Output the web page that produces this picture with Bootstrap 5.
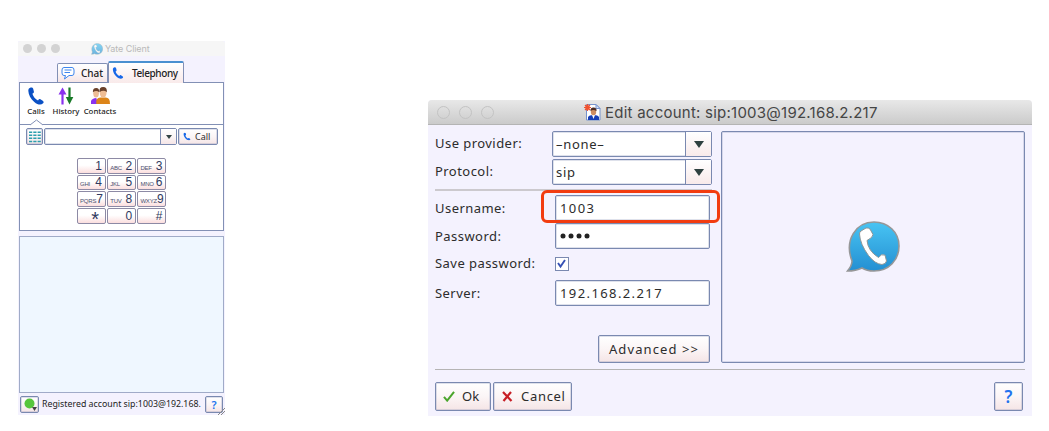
<!DOCTYPE html>
<html lang="en">
<head>
<meta charset="utf-8">
<meta name="viewport" content="width=device-width, initial-scale=1">
<title>Yate Client</title>
<link href="https://cdn.jsdelivr.net/npm/bootstrap@5.3.0/dist/css/bootstrap.min.css" rel="stylesheet">
<style>
  body { width: 1049px; height: 431px; overflow: hidden; background: #fff; color: #2c2c2c; font-family: "Noto Sans", "Open Sans", sans-serif; line-height: 1; white-space: nowrap; }
  svg { display: block; flex: none; }
  .win { background: #f4f2fe; }
  .edge { border: 1px solid #7a89b0; border-radius: 2px; box-shadow: inset 0 0 0 1px rgba(122, 137, 176, .25); }
  .face { background: linear-gradient(#fff, #fbf5f6 50%, #f5e5e6); color: #2c2c2c; padding: 0; font-size: inherit; line-height: 1; display: flex; align-items: center; }

  /* client window */
  .client { width: 207px; height: 374px; margin: 41px 0 0 18px; font-size: 9px; }
  .client-title { height: 15px; background: #f6f6f6; color: #b9b9b9; font-family: Inter, sans-serif; font-size: 9px; border-radius: 3px 3px 0 0; letter-spacing: -.1px; }
  .dot { width: 9px; height: 9px; border-radius: 50%; background: #d3d3d3; margin-right: 5px; }
  .tabs { height: 26px; padding-left: 39px; }
  .tab-box { border: 1px solid #8290b5; border-bottom: 0; border-radius: 2px 2px 0 0; font-size: 10px; font-weight: 500; color: #222; }
  .tab-chat { width: 51px; height: 19px; }
  .tab-tel { width: 76px; height: 22px; border-top: 2px solid #4a90d0; background: linear-gradient(#fff, #f9eaea); margin-bottom: -1px; z-index: 1; letter-spacing: -.4px; }
  .pane { margin: 0 1px; height: 149px; border: 1px solid #8290b5; background: #fff; }
  .tools { height: 42px; border-bottom: 1px solid #8290b5; padding: 4px 0 0 7px; font-size: 7.8px; font-weight: 500; color: #222; }
  .tool span { margin-top: 2px; line-height: 9px; }
  .notch { left: 10px; bottom: -2px; }
  .dial { height: 17px; margin: 3px 0 0 6px; gap: 1px; }
  .combo { background: #fff; }
  .pad { display: grid; grid-template-columns: repeat(3, 29px); grid-auto-rows: 15.5px; gap: 1.2px; margin: 13px 0 0 57px; font-family: "Liberation Sans", sans-serif; color: #303a60; }
  .key { border: 1px solid #8d8aa5; border-radius: 2px; padding: 0 3px 0 2px; background: linear-gradient(#fff 45%, #fbdede); font-size: 12px; display: flex; align-items: center; justify-content: space-between; }
  .key small { font-size: 6px; padding-top: 4px; letter-spacing: -.2px; color: #4a5070; }
  .log { margin: 5px 1px 0; height: 157px; border: 1.5px solid #a0abc8; background: #eff7ff; }
  .status { height: 17px; margin: 3px 2px 0; font-size: 8.8px; color: #222; }
  .grip { right: 0; bottom: 0; }

  /* account dialog */
  .dialog { width: 604px; height: 316px; margin: 100px 0 0 203px; font-size: 13px; letter-spacing: .45px; border-radius: 4px 4px 0 0; }
  .dialog-title { height: 25px; background: linear-gradient(#e8e8e8, #cbcbcb); border-bottom: 1px solid #b4b4b4; border-radius: 4px 4px 0 0; font-family: Inter, sans-serif; font-size: 15px; letter-spacing: .24px; color: #454545; padding-left: 9px; }
  .ring { width: 13px; height: 13px; border: 1px solid #c3c3c3; border-radius: 50%; margin-right: 9px; }
  .upper { height: 238px; padding: 6px 7px 0; }
  .form-side { width: 277px; }
  .pick { width: 160px; height: 26px; background: #fff; padding-left: 3px; letter-spacing: .7px; }
  .drop { width: 26px; border-left: 1px solid #7a89b0; background: linear-gradient(#fff, #f8eaea); }
  .field { width: 155px; height: 26px; background: #fff; margin-right: 2px; padding-left: 4px; letter-spacing: 1.4px; }
  .rule { height: 2px; background: #ccc9ce; }
  .check { width: 14px; height: 14px; border: 1px solid #7a89b0; background: #fff; margin: 4px 143px 0 0; }
  .halo { left: -15px; top: -6px; width: 179px; height: 33px; border: 3px solid #f23c10; border-radius: 6px; }
  .preview { width: 304px; height: 232px; margin-left: 9px; }
  .foot { margin: 6px 7px 0; border-top: 1px solid #b5b4b4; padding-top: 12px; height: 42px; }
  .foot .face { height: 29px; }
</style>
</head>
<body class="d-flex align-items-start">

<svg width="0" height="0" class="position-absolute">
  <defs>
    <linearGradient id="sky" x1="0" y1="0" x2="0" y2="1"><stop offset="0" stop-color="#48c4f3"/><stop offset="1" stop-color="#248fd2"/></linearGradient>
    <symbol id="handset" viewBox="0 0 16 16"><path d="M2.800.6C4 .1 5.200.5 5.500 1.600L6.100 4C6.300 4.900 5.800 5.400 4.800 5.900C5.500 8.500 7.400 10.600 9.800 11.900C10.500 11 11.100 10.500 11.900 10.900L14 12.300C15 13 15 13.700 14.300 14.500C12.500 16.300 9.500 15.900 6.500 13.300C3.200 10.500 1.300 6.800 1.200 3.600C1.100 2 1.600 1.100 2.800.6Z"/></symbol>
    <symbol id="yate" viewBox="0 0 54 54"><path d="M28 2C42 2 53 12 53 26S43 51 28 51C24 51 19 50 16 48C12 50 7 51 1.500 51C4 48 6 44 6 41C-2 20 10 2 28 2Z" fill="url(#sky)" stroke="#969798" stroke-width="1.600"/><path d="M15 11L20 8Q22.500 7.500 24 9L27 14.500Q27 17.500 21 20.500Q22 31 32.500 37.500Q35 33.500 39 35L40.500 41Q40 44 36 44.500Q29 44 22.500 35.500Q14 24 13.500 14Q13.500 12 15 11Z" fill="#fff" stroke="#8d9699" stroke-width="1"/></symbol>
  </defs>
</svg>

<section class="win client position-relative">
  <header class="client-title d-flex align-items-center">
    <i class="dot" style="margin-left:5px"></i><i class="dot"></i><i class="dot"></i>
    <svg width="12" height="12" style="margin-left:26px" opacity=".65"><use href="#yate"/></svg>
    <span style="margin-left:2px">Yate Client</span>
  </header>
  <nav class="tabs d-flex align-items-end">
    <div class="tab-box tab-chat face">
      <svg width="14" height="14" viewBox="0 0 14 14" style="margin:0 6px 0 3px" fill="#fff" stroke="#3d86ee"><path d="M3 1.500H11Q13 1.500 13 4V7Q13 9.500 11 9.500H8L3.500 13L4.500 9.500H3Q1 9.500 1 7V4Q1 1.500 3 1.500Z"/><path d="M3.500 4H10.500M3.500 6.500H9"/></svg>
      <span>Chat</span>
    </div>
    <div class="tab-box tab-tel d-flex align-items-center">
      <svg width="12" height="12" fill="#1768e8" style="margin:0 8px 0 3px"><use href="#handset"/></svg>
      <span>Telephony</span>
    </div>
  </nav>
  <main class="pane">
    <div class="tools d-flex position-relative">
      <div class="tool d-flex flex-column align-items-center" style="width:18px">
        <svg width="18" height="18" fill="#0a50c4"><use href="#handset"/></svg><span>Calls</span>
      </div>
      <div class="tool d-flex flex-column align-items-center" style="width:26px;margin-left:8px">
        <svg width="16" height="18" viewBox="0 0 16 17" stroke-width="2.200" fill="none"><path d="M4.500 17V5" stroke="#8931ee"/><path d="M.5 7L4.500 0L8.500 7Z" fill="#8931ee"/><path d="M11.500 0V11" stroke="#187a28"/><path d="M7.800 9.500L11.500 17L15.300 9.500Z" fill="#187a28"/></svg><span>History</span>
      </div>
      <div class="tool d-flex flex-column align-items-center" style="width:32px;margin-left:5px">
        <svg width="19" height="18" viewBox="0 0 18 17"><path d="M0 16V13Q1 11 5 10.500L7 16Z" fill="#8931ee"/><path d="M5 16V13Q6 10 9 10H14Q18 10 18 16Z" fill="#dc8519"/><ellipse cx="4.800" cy="6" rx="2.700" ry="4" fill="#edbc95"/><path d="M1.800 5Q1.500 1 5 1Q8 1 7.800 5Q5 2.500 1.800 5Z" fill="#6a412a"/><ellipse cx="11.500" cy="5.500" rx="3.200" ry="4.700" fill="#efbd94"/><path d="M8 5Q7.500 0 11.500 0Q15.500 0 15 5Q12 2.200 8 5Z" fill="#6a412a"/></svg><span>Contacts</span>
      </div>
      <svg class="notch position-absolute" width="13" height="7" viewBox="0 0 13 7" fill="#fff" stroke="#8290b5"><path d="M0 6L6.500 1L13 6"/></svg>
    </div>
    <div class="dial d-flex">
      <div class="edge face justify-content-center" style="width:17px"><svg width="12" height="12" viewBox="0 0 12 12" stroke="#2b9fad" stroke-width="1.500" stroke-dasharray="3.200 1.100"><path d="M0 1.300H12M0 4.300H12M0 7.300H12M0 10.500H12"/></svg></div>
      <div class="edge combo d-flex justify-content-end" style="width:133px"><div class="face justify-content-center" style="width:16px;border-left:1px solid #8290b5"><svg width="6" height="4" fill="#344"><path d="M0 0H6L3 4Z"/></svg></div></div>
      <button class="edge face" style="width:40px"><svg width="8" height="9" viewBox="0 0 16 16" fill="#1768e8" style="margin:0 4px"><use href="#handset"/></svg>Call</button>
    </div>
    <div class="pad">
      <div class="key"><small></small>1</div><div class="key"><small>ABC</small>2</div><div class="key"><small>DEF</small>3</div>
      <div class="key"><small>GHI</small>4</div><div class="key"><small>JKL</small>5</div><div class="key"><small>MNO</small>6</div>
      <div class="key"><small>PQRS</small>7</div><div class="key"><small>TUV</small>8</div><div class="key"><small>WXYZ</small>9</div>
      <div class="key"><small></small><span style="font-size:20px;line-height:12px;padding:7px 3px 0 0">*</span></div><div class="key"><small></small>0</div><div class="key"><small></small>#</div>
    </div>
  </main>
  <div class="log"></div>
  <footer class="status d-flex align-items-center">
    <div class="edge face h-100" style="width:19px"><svg width="16" height="15" viewBox="0 0 16 15"><circle cx="8.500" cy="6.500" r="5" fill="#56c63c"/><path d="M11 10H16L13.500 14Z" fill="#444"/></svg></div>
    <span class="me-auto" style="margin-left:3px">Registered account sip:1003@192.168.</span>
    <button class="edge face h-100 justify-content-center" style="width:18px;color:#2273ee;font-size:11px;font-weight:600">?</button>
  </footer>
  <svg class="grip position-absolute" width="7" height="7" stroke="#888"><path d="M0 7L7 0M3 7L7 3"/></svg>
</section>

<section class="win dialog">
  <header class="dialog-title d-flex align-items-center">
    <i class="ring"></i><i class="ring"></i><i class="ring"></i>
    <svg width="18" height="18" viewBox="0 0 18 18" style="margin:0 4px 0 80px"><path d="M3.500 1.500H13L17 5.500V17H3.500Z" fill="#fff" stroke="#7793cd"/><path d="M13 1.500V5.500H17Z" fill="#d7e4fc" stroke="#7793cd"/><path d="M5 17V14Q6 12 10.500 12Q15 12 16 14V17Z" fill="#173fb8"/><path d="M9 12H12L10.500 16Z" fill="#fff"/><ellipse cx="10.500" cy="8.800" rx="2.700" ry="3.500" fill="#cf8e62"/><path d="M7.500 8Q7 4.500 10.500 4.500T13.500 8Q10 6 7.500 8Z" fill="#4d2b22"/><path d="M4.500 1V8M1 4.500H8M2 2L7 7M7 2L2 7" stroke="#f1512d" stroke-width="1.200"/><circle cx="4.500" cy="4.500" r="2.300" fill="#f1512d"/></svg>
    <span>Edit account: sip:1003@192.168.2.217</span>
  </header>
  <div class="upper d-flex">
    <div class="form-side">
      <div class="d-flex justify-content-between" style="height:28px"><label style="padding-top:6px">Use provider:</label>
        <div class="edge pick d-flex align-items-center">–none–<div class="drop ms-auto h-100 d-flex align-items-center justify-content-center"><svg width="10" height="7" fill="#2e4140"><path d="M0 0H10L5 7Z"/></svg></div></div></div>
      <div class="d-flex justify-content-between" style="height:30px"><label style="padding-top:6px">Protocol:</label>
        <div class="edge pick d-flex align-items-center">sip<div class="drop ms-auto h-100 d-flex align-items-center justify-content-center"><svg width="10" height="7" fill="#2e4140"><path d="M0 0H10L5 7Z"/></svg></div></div></div>
      <div class="rule"></div>
      <div class="d-flex justify-content-between" style="height:28px;margin-top:4px"><label style="padding-top:7px">Username:</label>
        <div class="edge field d-flex align-items-center position-relative">1003<i class="halo position-absolute"></i></div></div>
      <div class="d-flex justify-content-between" style="height:30px"><label style="padding-top:7px">Password:</label>
        <div class="edge field d-flex align-items-center"><svg width="31" height="6" fill="#222"><circle cx="3" cy="3" r="2.500"/><circle cx="11" cy="3" r="2.500"/><circle cx="19" cy="3" r="2.500"/><circle cx="27" cy="3" r="2.500"/></svg></div></div>
      <div class="d-flex justify-content-between" style="height:27px"><label style="padding-top:4px">Save password:</label>
        <div class="check"><svg width="11" height="11" viewBox="0 0 11 11" fill="none" stroke="#3651b5" stroke-width="1.900"><path d="M2 5L4.500 8.500L9 2"/></svg></div></div>
      <div class="d-flex justify-content-between" style="height:55px"><label style="padding-top:7px">Server:</label>
        <div class="edge field d-flex align-items-center">192.168.2.217</div></div>
      <button class="edge face ms-auto justify-content-center" style="width:112px;height:28px;margin-right:2px;letter-spacing:1.1px">Advanced &gt;&gt;</button>
    </div>
    <div class="edge preview d-flex align-items-center justify-content-center"><svg width="54" height="54"><use href="#yate"/></svg></div>
  </div>
  <footer class="foot d-flex">
    <button class="edge face" style="width:56px"><svg width="12" height="11" viewBox="0 0 13 12" fill="none" stroke="#4aa52c" stroke-width="2.200" style="margin:0 7px"><path d="M1 6.500L4.500 10.500L12 1"/></svg>Ok</button>
    <button class="edge face" style="width:79px;margin-left:2px;letter-spacing:.7px"><svg width="11" height="11" viewBox="0 0 11 11" fill="none" stroke="#c71f26" stroke-width="2.200" style="margin:0 8px"><path d="M1 1L9.500 10M9 1L1.500 10"/></svg>Cancel</button>
    <button class="edge face ms-auto justify-content-center" style="width:29px;margin-right:2px;color:#2273ee;font-size:17px;font-weight:600">?</button>
  </footer>
</section>

<script src="https://cdn.jsdelivr.net/npm/bootstrap@5.3.0/dist/js/bootstrap.bundle.min.js"></script>
</body>
</html>
